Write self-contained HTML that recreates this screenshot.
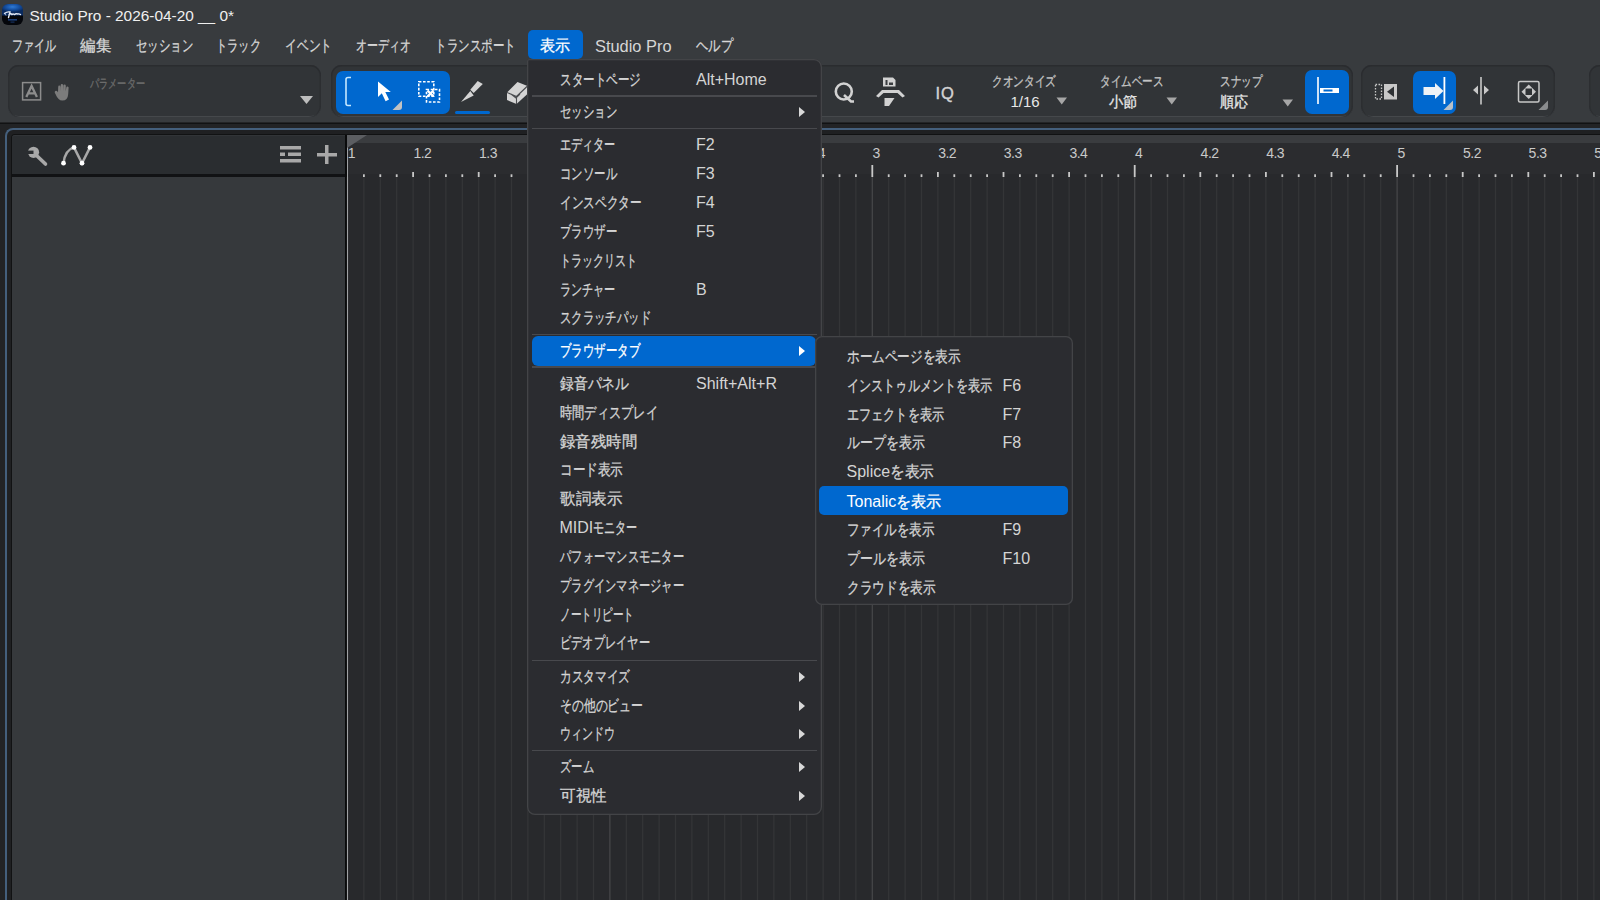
<!DOCTYPE html><html lang="ja"><head><meta charset="utf-8"><style>
html,body{margin:0;padding:0;width:1600px;height:900px;overflow:hidden;background:#232426}
body{position:relative;font-family:"Liberation Sans",sans-serif}
.r{position:absolute}
.t{position:absolute;white-space:nowrap;line-height:20px}
.j{display:inline-block;font-weight:normal;vertical-align:baseline}
.j i{display:inline-block;font-style:normal;transform-origin:0 50%;white-space:nowrap;-webkit-text-stroke:0.3px currentColor}
</style></head><body>
<div class=r style="left:0.0px;top:0.0px;width:1600.0px;height:122.0px;background:#383b3e;"></div>
<div class=r style="left:1.5px;top:3.5px;width:21px;height:21.5px;border-radius:6px;background:radial-gradient(ellipse 60% 45% at 50% 25%,#2f7ad6,#134b9a 60%,#0a2a5e 100%) top/100% 55% no-repeat,#04060b"></div>
<svg class=r style="left:2px;top:9px" width="20" height="15" viewBox="0 0 20 15"><path d="M2.5 4.5 Q5 2.5 8 3 L6.5 8.5 M7 5.5 Q9 4 10 5.5 Q11 4.5 12.5 5.5 Q14 4.2 15.5 5 Q17 4.5 18.5 5.5" stroke="#e8eef8" stroke-width="1.4" fill="none" stroke-linecap="round"/><path d="M3 3.8 L4 6.5" stroke="#9fb8e0" stroke-width="1"/><rect x="6" y="10" width="9" height="1.6" fill="#1b3e78"/><rect x="8.5" y="12.5" width="4" height="1.2" fill="#16305c"/></svg>
<div class=t style="left:29.5px;top:5.8px;font-size:15.4px;color:#f0f0f0;">Studio Pro - 2026-04-20 __ 0*</div>
<div class=t style="left:12.0px;top:35.5px;font-size:16.0px;color:#d6d6d6;"><b class=j style="width:44.00px"><i style="transform:scaleX(0.6875)">ファイル</i></b></div>
<div class=t style="left:80.0px;top:35.5px;font-size:16.0px;color:#d6d6d6;"><b class=j style="width:31.00px"><i style="transform:scaleX(0.9688)">編集</i></b></div>
<div class=t style="left:136.0px;top:35.5px;font-size:16.0px;color:#d6d6d6;"><b class=j style="width:57.00px"><i style="transform:scaleX(0.7125)">セッション</i></b></div>
<div class=t style="left:216.0px;top:35.5px;font-size:16.0px;color:#d6d6d6;"><b class=j style="width:45.00px"><i style="transform:scaleX(0.7031)">トラック</i></b></div>
<div class=t style="left:285.0px;top:35.5px;font-size:16.0px;color:#d6d6d6;"><b class=j style="width:47.00px"><i style="transform:scaleX(0.7344)">イベント</i></b></div>
<div class=t style="left:356.0px;top:35.5px;font-size:16.0px;color:#d6d6d6;"><b class=j style="width:55.00px"><i style="transform:scaleX(0.6875)">オーディオ</i></b></div>
<div class=t style="left:434.5px;top:35.5px;font-size:16.0px;color:#d6d6d6;"><b class=j style="width:80.50px"><i style="transform:scaleX(0.7188)">トランスポート</i></b></div>
<div class=r style="left:528px;top:30px;width:55px;height:29px;border-radius:5px;background:#0068cf"></div>
<div class=t style="left:540.0px;top:35.5px;font-size:16.0px;color:#ffffff;"><b class=j style="width:30.00px"><i style="transform:scaleX(0.9375)">表示</i></b></div>
<div class=t style="left:595.0px;top:35.5px;font-size:16.4px;color:#d6d6d6;">Studio Pro</div>
<div class=t style="left:696.0px;top:35.5px;font-size:16.0px;color:#d6d6d6;"><b class=j style="width:37.00px"><i style="transform:scaleX(0.7708)">ヘルプ</i></b></div>
<div class=r style="left:8px;top:65px;width:313px;height:52px;border-radius:11px;background:#313437;box-shadow:inset 0 1.5px 0.5px #2a2c2f,inset 1.5px 0 0.5px #2c2e31,inset -1.5px 0 0.5px #2c2e31,inset 0 -1px 0 #45484b"></div>
<div class=r style="left:331px;top:65px;width:1022px;height:52px;border-radius:11px;background:#313437;box-shadow:inset 0 1.5px 0.5px #2a2c2f,inset 1.5px 0 0.5px #2c2e31,inset -1.5px 0 0.5px #2c2e31,inset 0 -1px 0 #45484b"></div>
<div class=r style="left:1361px;top:65px;width:194px;height:52px;border-radius:11px;background:#313437;box-shadow:inset 0 1.5px 0.5px #2a2c2f,inset 1.5px 0 0.5px #2c2e31,inset -1.5px 0 0.5px #2c2e31,inset 0 -1px 0 #45484b"></div>
<div class=r style="left:1589px;top:65px;width:40px;height:52px;border-radius:11px;background:#313437;box-shadow:inset 0 1.5px 0.5px #2a2c2f,inset 1.5px 0 0.5px #2c2e31,inset -1.5px 0 0.5px #2c2e31,inset 0 -1px 0 #45484b"></div>
<svg class=r style="left:21px;top:81px" width="22" height="21" viewBox="0 0 22 21"><rect x="1.6" y="1.6" width="18" height="17.3" fill="none" stroke="#8c8c8c" stroke-width="1.5"/><path d="M5.3 16 L10.6 5 L15.9 16 M7.4 12.3 L13.8 12.3" stroke="#8c8c8c" stroke-width="2.3" fill="none"/></svg>
<svg class=r style="left:53px;top:83px" width="19" height="19" viewBox="0 0 19 19"><path d="M2.2 10.5 Q1 8.8 2.3 8 Q3.6 7.3 5 9.2 L5.2 4 Q5.2 2.6 6.3 2.6 Q7.4 2.6 7.5 4 L7.6 8 L7.7 2.2 Q7.7 0.9 8.9 0.9 Q10.1 0.9 10.1 2.2 L10.2 8 L10.4 2.6 Q10.4 1.4 11.6 1.4 Q12.8 1.4 12.8 2.7 L12.7 8.3 L13.3 4.5 Q13.5 3.3 14.6 3.4 Q15.7 3.5 15.6 4.8 L15.2 11 Q14.8 17.6 9.3 17.6 Q5.2 17.6 2.2 10.5 Z" fill="#7c7c7c"/></svg>
<div class=t style="left:89.5px;top:73.5px;font-size:13.0px;color:#6c6c6c;"><b class=j style="width:55.00px"><i style="transform:scaleX(0.7051)">パラメーター</i></b></div>
<svg class=r style="left:299px;top:95px" width="15" height="10"><path d="M1 1 L14 1 L7.5 9 Z" fill="#bdbdbd"/></svg>
<div class=r style="left:335.5px;top:70.5px;width:114px;height:43px;border-radius:7px;background:#0068cf"></div>
<svg class=r style="left:343px;top:76px" width="10" height="32"><path d="M8 1.5 L5 1.5 Q3 1.5 3 3.5 L3 27.5 Q3 29.5 5 29.5 L8 29.5" stroke="#c4e8ff" stroke-width="1.6" fill="none"/></svg>
<svg class=r style="left:376px;top:80px" width="17" height="23"><path d="M2 1.5 L2 17 L5.8 13.2 L9.6 21.2 L13 19.6 L9.3 12 L14.8 12 Z" fill="#ffffff"/></svg>
<svg class=r style="left:392px;top:100px" width="11" height="11"><path d="M0.5 10 L10 0.5 L10 7 Q10 10 7 10 Z" fill="#c2c2c2"/></svg>
<svg class=r style="left:416px;top:79px" width="26" height="26"><rect x="2.8" y="2.8" width="15" height="14.5" fill="none" stroke="#fff" stroke-width="1.6" stroke-dasharray="2.6 1.6"/><rect x="10.5" y="10.5" width="13" height="12.5" fill="none" stroke="#fff" stroke-width="1.6" stroke-dasharray="2.6 1.6"/><path d="M11.5 11.5 L17.5 17.5 M17.5 11.5 L11.5 17.5" stroke="#fff" stroke-width="2.4"/></svg>
<svg class=r style="left:458px;top:78px" width="28" height="27"><path d="M3 24 L12.3 13 L15.7 17.6 Z" fill="#d4d4d4"/><path d="M12.3 11.7 L19.7 3 L24.8 5.9 L15.7 15 Z" fill="#d4d4d4"/></svg>
<div class=r style="left:455px;top:110.5px;width:35px;height:3.5px;border-radius:2px;background:#0068cf"></div>
<svg class=r style="left:504px;top:79px" width="24" height="27"><path d="M3 13.5 L13.5 3 L23.5 7 L23.5 15 L12.5 25 L3 21 Z" fill="#d4d4d4"/><path d="M3 13.5 L12.5 17.5 L23.5 7 M12.5 17.5 L12.5 25 M7 15 L12 19 L16 15" stroke="#4a4c4f" stroke-width="1.1" fill="none"/></svg>
<svg class=r style="left:832px;top:80px" width="24" height="24"><circle cx="11.8" cy="11.5" r="8" fill="none" stroke="#d2d2d2" stroke-width="2.6"/><path d="M12 15 L19 21.5 L22 21.5" stroke="#d2d2d2" stroke-width="2.6" fill="none"/></svg>
<svg class=r style="left:874px;top:76px" width="33" height="32"><path d="M9 1.5 L19 1.5 L21.5 4 L21.5 10.5 L9 10.5 Z" fill="#d2d2d2"/><rect x="11.5" y="4" width="2" height="5" fill="#3a3d40"/><rect x="15" y="6.5" width="4" height="2.5" fill="#3a3d40"/><path d="M2 20 L8 14 L25 14 L31 20 L28.5 21.5 L23.5 17 L9.5 17 L4.5 21.5 Z" fill="#d2d2d2"/><path d="M10.5 22 L20.5 22 L15 30 L10.5 30 Z" fill="#d2d2d2"/></svg>
<div class=t style="left:935.5px;top:82.5px;font-size:16.5px;line-height:20px;color:#d2d2d2;letter-spacing:1px;-webkit-text-stroke:0.4px #d2d2d2">IQ</div>
<div class=t style="left:992.0px;top:71.0px;font-size:14.0px;color:#c4c4c4;"><b class=j style="width:64.00px"><i style="transform:scaleX(0.7619)">クオンタイズ</i></b></div>
<div class=t style="left:1010.5px;top:92.0px;font-size:15.0px;color:#e8e8e8;">1/16</div>
<svg class=r style="left:1056px;top:97px" width="12" height="8"><path d="M0.5 0.5 L11 0.5 L5.75 7.5 Z" fill="#a6a6a6"/></svg>
<div class=t style="left:1099.5px;top:71.0px;font-size:14.0px;color:#c4c4c4;"><b class=j style="width:63.50px"><i style="transform:scaleX(0.7560)">タイムベース</i></b></div>
<div class=t style="left:1108.5px;top:92.0px;font-size:15.0px;color:#e8e8e8;"><b class=j style="width:28.50px"><i style="transform:scaleX(0.9500)">小節</i></b></div>
<svg class=r style="left:1166px;top:97px" width="12" height="8"><path d="M0.5 0.5 L11 0.5 L5.75 7.5 Z" fill="#a6a6a6"/></svg>
<div class=t style="left:1219.5px;top:71.0px;font-size:14.0px;color:#c4c4c4;"><b class=j style="width:42.50px"><i style="transform:scaleX(0.7589)">スナップ</i></b></div>
<div class=t style="left:1220.0px;top:92.0px;font-size:15.0px;color:#e8e8e8;"><b class=j style="width:28.00px"><i style="transform:scaleX(0.9333)">順応</i></b></div>
<svg class=r style="left:1282px;top:98.5px" width="12" height="8"><path d="M0.5 0.5 L11 0.5 L5.75 7.5 Z" fill="#a6a6a6"/></svg>
<div class=r style="left:1305px;top:70px;width:44px;height:44px;border-radius:7px;background:#0068cf"></div>
<svg class=r style="left:1314px;top:76px" width="28" height="30"><rect x="3.2" y="1" width="1.6" height="27" fill="#fff"/><rect x="6" y="12" width="19" height="5" fill="#fff"/><rect x="9.5" y="13.5" width="9" height="2" fill="#0068cf"/></svg>
<svg class=r style="left:1373px;top:82px" width="26" height="19"><rect x="2.5" y="2.5" width="6" height="14.5" fill="none" stroke="#c8c8c8" stroke-width="1.3" stroke-dasharray="1.6 1.4"/><rect x="11" y="2" width="13" height="15.5" fill="#c8c8c8"/><path d="M21 4.5 L14 9.75 L21 15 Z" fill="#2f3235"/></svg>
<div class=r style="left:1413px;top:70.5px;width:43px;height:43px;border-radius:7px;background:#0068cf"></div>
<svg class=r style="left:1422px;top:76px" width="26" height="30"><path d="M1.5 11 L13 11 L13 7 L21.5 15 L13 23 L13 19 L1.5 19 Z" fill="#eef2f6"/><rect x="21.5" y="1" width="1.8" height="27" fill="#fff"/></svg>
<svg class=r style="left:1443px;top:100px" width="11" height="11"><path d="M0.5 10 L10 0.5 L10 7 Q10 10 7 10 Z" fill="#b8c0c8"/></svg>
<svg class=r style="left:1471px;top:76px" width="20" height="30"><rect x="9.2" y="1" width="1.6" height="27.5" fill="#c8c8c8"/><path d="M7 9.5 L2 14 L7 18.5 Z M13 9.5 L18 14 L13 18.5 Z" fill="#c8c8c8"/></svg>
<svg class=r style="left:1516px;top:79px" width="26" height="26"><rect x="2.5" y="2.5" width="20.5" height="20.5" rx="1.5" fill="none" stroke="#c8c8c8" stroke-width="1.5"/><path d="M12.75 5.5 L20 12.75 L12.75 20 L5.5 12.75 Z" fill="#c8c8c8"/><rect x="9.5" y="9.5" width="6.5" height="6.5" fill="#2f3235"/></svg>
<svg class=r style="left:1538px;top:100px" width="11" height="11"><path d="M0.5 10 L10 0.5 L10 7 Q10 10 7 10 Z" fill="#8a8c8e"/></svg>
<div class=r style="left:0.0px;top:122.5px;width:1600.0px;height:1.5px;background:#111213;"></div>
<div class=r style="left:0.0px;top:124.0px;width:1600.0px;height:776.0px;background:#222325;"></div>
<div class=r style="left:5px;top:128px;width:1600px;height:800px;border:2px solid #445f7c;border-right:none;border-top-left-radius:8px;box-sizing:border-box;background:#1f2022"></div>
<div class=r style="left:11px;top:134px;width:1600px;height:800px;border-top-left-radius:4px;background:#111213"></div>
<div class=r style="left:12px;top:135px;width:333px;height:39px;border-top-left-radius:3px;background:#2a2d30;box-shadow:inset 0 1px 0 #313437"></div>
<div class=r style="left:12.0px;top:174.0px;width:333.0px;height:3.0px;background:#111214;"></div>
<div class=r style="left:12.0px;top:177.0px;width:333.0px;height:723.0px;background:#36393c;"></div>
<div class=r style="left:345.0px;top:135.0px;width:2.0px;height:765.0px;background:#0a0b0c;"></div>
<div class=r style="left:347.0px;top:135.0px;width:1253.0px;height:8.0px;background:#3a3c3f;"></div>
<div class=r style="left:347.0px;top:143.0px;width:1253.0px;height:31.0px;background:#2b2c2f;"></div>
<div class=r style="left:347.0px;top:174.0px;width:1253.0px;height:726.0px;background:#28292c;"></div>
<svg class=r style="left:0;top:177px" width="1600" height="723"><rect x="346.85" y="0" width="1.3" height="723" fill="#454648"/><rect x="363.25" y="0" width="1.3" height="723" fill="#343537"/><rect x="379.65" y="0" width="1.3" height="723" fill="#343537"/><rect x="396.05" y="0" width="1.3" height="723" fill="#343537"/><rect x="412.45" y="0" width="1.3" height="723" fill="#343537"/><rect x="428.85" y="0" width="1.3" height="723" fill="#343537"/><rect x="445.25" y="0" width="1.3" height="723" fill="#343537"/><rect x="461.65" y="0" width="1.3" height="723" fill="#343537"/><rect x="478.05" y="0" width="1.3" height="723" fill="#343537"/><rect x="494.45" y="0" width="1.3" height="723" fill="#343537"/><rect x="510.85" y="0" width="1.3" height="723" fill="#343537"/><rect x="527.25" y="0" width="1.3" height="723" fill="#343537"/><rect x="543.65" y="0" width="1.3" height="723" fill="#343537"/><rect x="560.05" y="0" width="1.3" height="723" fill="#343537"/><rect x="576.45" y="0" width="1.3" height="723" fill="#343537"/><rect x="592.85" y="0" width="1.3" height="723" fill="#343537"/><rect x="609.25" y="0" width="1.3" height="723" fill="#454648"/><rect x="625.65" y="0" width="1.3" height="723" fill="#343537"/><rect x="642.05" y="0" width="1.3" height="723" fill="#343537"/><rect x="658.45" y="0" width="1.3" height="723" fill="#343537"/><rect x="674.85" y="0" width="1.3" height="723" fill="#343537"/><rect x="691.25" y="0" width="1.3" height="723" fill="#343537"/><rect x="707.65" y="0" width="1.3" height="723" fill="#343537"/><rect x="724.05" y="0" width="1.3" height="723" fill="#343537"/><rect x="740.45" y="0" width="1.3" height="723" fill="#343537"/><rect x="756.85" y="0" width="1.3" height="723" fill="#343537"/><rect x="773.25" y="0" width="1.3" height="723" fill="#343537"/><rect x="789.65" y="0" width="1.3" height="723" fill="#343537"/><rect x="806.05" y="0" width="1.3" height="723" fill="#343537"/><rect x="822.45" y="0" width="1.3" height="723" fill="#343537"/><rect x="838.85" y="0" width="1.3" height="723" fill="#343537"/><rect x="855.25" y="0" width="1.3" height="723" fill="#343537"/><rect x="871.65" y="0" width="1.3" height="723" fill="#454648"/><rect x="888.05" y="0" width="1.3" height="723" fill="#343537"/><rect x="904.45" y="0" width="1.3" height="723" fill="#343537"/><rect x="920.85" y="0" width="1.3" height="723" fill="#343537"/><rect x="937.25" y="0" width="1.3" height="723" fill="#343537"/><rect x="953.65" y="0" width="1.3" height="723" fill="#343537"/><rect x="970.05" y="0" width="1.3" height="723" fill="#343537"/><rect x="986.45" y="0" width="1.3" height="723" fill="#343537"/><rect x="1002.85" y="0" width="1.3" height="723" fill="#343537"/><rect x="1019.25" y="0" width="1.3" height="723" fill="#343537"/><rect x="1035.65" y="0" width="1.3" height="723" fill="#343537"/><rect x="1052.05" y="0" width="1.3" height="723" fill="#343537"/><rect x="1068.45" y="0" width="1.3" height="723" fill="#343537"/><rect x="1084.85" y="0" width="1.3" height="723" fill="#343537"/><rect x="1101.25" y="0" width="1.3" height="723" fill="#343537"/><rect x="1117.65" y="0" width="1.3" height="723" fill="#343537"/><rect x="1134.05" y="0" width="1.3" height="723" fill="#454648"/><rect x="1150.45" y="0" width="1.3" height="723" fill="#343537"/><rect x="1166.85" y="0" width="1.3" height="723" fill="#343537"/><rect x="1183.25" y="0" width="1.3" height="723" fill="#343537"/><rect x="1199.65" y="0" width="1.3" height="723" fill="#343537"/><rect x="1216.05" y="0" width="1.3" height="723" fill="#343537"/><rect x="1232.45" y="0" width="1.3" height="723" fill="#343537"/><rect x="1248.85" y="0" width="1.3" height="723" fill="#343537"/><rect x="1265.25" y="0" width="1.3" height="723" fill="#343537"/><rect x="1281.65" y="0" width="1.3" height="723" fill="#343537"/><rect x="1298.05" y="0" width="1.3" height="723" fill="#343537"/><rect x="1314.45" y="0" width="1.3" height="723" fill="#343537"/><rect x="1330.85" y="0" width="1.3" height="723" fill="#343537"/><rect x="1347.25" y="0" width="1.3" height="723" fill="#343537"/><rect x="1363.65" y="0" width="1.3" height="723" fill="#343537"/><rect x="1380.05" y="0" width="1.3" height="723" fill="#343537"/><rect x="1396.45" y="0" width="1.3" height="723" fill="#454648"/><rect x="1412.85" y="0" width="1.3" height="723" fill="#343537"/><rect x="1429.25" y="0" width="1.3" height="723" fill="#343537"/><rect x="1445.65" y="0" width="1.3" height="723" fill="#343537"/><rect x="1462.05" y="0" width="1.3" height="723" fill="#343537"/><rect x="1478.45" y="0" width="1.3" height="723" fill="#343537"/><rect x="1494.85" y="0" width="1.3" height="723" fill="#343537"/><rect x="1511.25" y="0" width="1.3" height="723" fill="#343537"/><rect x="1527.65" y="0" width="1.3" height="723" fill="#343537"/><rect x="1544.05" y="0" width="1.3" height="723" fill="#343537"/><rect x="1560.45" y="0" width="1.3" height="723" fill="#343537"/><rect x="1576.85" y="0" width="1.3" height="723" fill="#343537"/><rect x="1593.25" y="0" width="1.3" height="723" fill="#343537"/></svg>
<svg class=r style="left:0;top:0" width="1600" height="180"><rect x="363.00" y="174.3" width="1.8" height="2.7" fill="#c8c8c8"/><rect x="379.40" y="174.3" width="1.8" height="2.7" fill="#c8c8c8"/><rect x="395.80" y="174.3" width="1.8" height="2.7" fill="#c8c8c8"/><rect x="412.20" y="172" width="1.8" height="5" fill="#c8c8c8"/><rect x="428.60" y="174.3" width="1.8" height="2.7" fill="#c8c8c8"/><rect x="445.00" y="174.3" width="1.8" height="2.7" fill="#c8c8c8"/><rect x="461.40" y="174.3" width="1.8" height="2.7" fill="#c8c8c8"/><rect x="477.80" y="172" width="1.8" height="5" fill="#c8c8c8"/><rect x="494.20" y="174.3" width="1.8" height="2.7" fill="#c8c8c8"/><rect x="510.60" y="174.3" width="1.8" height="2.7" fill="#c8c8c8"/><rect x="527.00" y="174.3" width="1.8" height="2.7" fill="#c8c8c8"/><rect x="543.40" y="172" width="1.8" height="5" fill="#c8c8c8"/><rect x="559.80" y="174.3" width="1.8" height="2.7" fill="#c8c8c8"/><rect x="576.20" y="174.3" width="1.8" height="2.7" fill="#c8c8c8"/><rect x="592.60" y="174.3" width="1.8" height="2.7" fill="#c8c8c8"/><rect x="609.00" y="165" width="1.8" height="12" fill="#c8c8c8"/><rect x="625.40" y="174.3" width="1.8" height="2.7" fill="#c8c8c8"/><rect x="641.80" y="174.3" width="1.8" height="2.7" fill="#c8c8c8"/><rect x="658.20" y="174.3" width="1.8" height="2.7" fill="#c8c8c8"/><rect x="674.60" y="172" width="1.8" height="5" fill="#c8c8c8"/><rect x="691.00" y="174.3" width="1.8" height="2.7" fill="#c8c8c8"/><rect x="707.40" y="174.3" width="1.8" height="2.7" fill="#c8c8c8"/><rect x="723.80" y="174.3" width="1.8" height="2.7" fill="#c8c8c8"/><rect x="740.20" y="172" width="1.8" height="5" fill="#c8c8c8"/><rect x="756.60" y="174.3" width="1.8" height="2.7" fill="#c8c8c8"/><rect x="773.00" y="174.3" width="1.8" height="2.7" fill="#c8c8c8"/><rect x="789.40" y="174.3" width="1.8" height="2.7" fill="#c8c8c8"/><rect x="805.80" y="172" width="1.8" height="5" fill="#c8c8c8"/><rect x="822.20" y="174.3" width="1.8" height="2.7" fill="#c8c8c8"/><rect x="838.60" y="174.3" width="1.8" height="2.7" fill="#c8c8c8"/><rect x="855.00" y="174.3" width="1.8" height="2.7" fill="#c8c8c8"/><rect x="871.40" y="165" width="1.8" height="12" fill="#c8c8c8"/><rect x="887.80" y="174.3" width="1.8" height="2.7" fill="#c8c8c8"/><rect x="904.20" y="174.3" width="1.8" height="2.7" fill="#c8c8c8"/><rect x="920.60" y="174.3" width="1.8" height="2.7" fill="#c8c8c8"/><rect x="937.00" y="172" width="1.8" height="5" fill="#c8c8c8"/><rect x="953.40" y="174.3" width="1.8" height="2.7" fill="#c8c8c8"/><rect x="969.80" y="174.3" width="1.8" height="2.7" fill="#c8c8c8"/><rect x="986.20" y="174.3" width="1.8" height="2.7" fill="#c8c8c8"/><rect x="1002.60" y="172" width="1.8" height="5" fill="#c8c8c8"/><rect x="1019.00" y="174.3" width="1.8" height="2.7" fill="#c8c8c8"/><rect x="1035.40" y="174.3" width="1.8" height="2.7" fill="#c8c8c8"/><rect x="1051.80" y="174.3" width="1.8" height="2.7" fill="#c8c8c8"/><rect x="1068.20" y="172" width="1.8" height="5" fill="#c8c8c8"/><rect x="1084.60" y="174.3" width="1.8" height="2.7" fill="#c8c8c8"/><rect x="1101.00" y="174.3" width="1.8" height="2.7" fill="#c8c8c8"/><rect x="1117.40" y="174.3" width="1.8" height="2.7" fill="#c8c8c8"/><rect x="1133.80" y="165" width="1.8" height="12" fill="#c8c8c8"/><rect x="1150.20" y="174.3" width="1.8" height="2.7" fill="#c8c8c8"/><rect x="1166.60" y="174.3" width="1.8" height="2.7" fill="#c8c8c8"/><rect x="1183.00" y="174.3" width="1.8" height="2.7" fill="#c8c8c8"/><rect x="1199.40" y="172" width="1.8" height="5" fill="#c8c8c8"/><rect x="1215.80" y="174.3" width="1.8" height="2.7" fill="#c8c8c8"/><rect x="1232.20" y="174.3" width="1.8" height="2.7" fill="#c8c8c8"/><rect x="1248.60" y="174.3" width="1.8" height="2.7" fill="#c8c8c8"/><rect x="1265.00" y="172" width="1.8" height="5" fill="#c8c8c8"/><rect x="1281.40" y="174.3" width="1.8" height="2.7" fill="#c8c8c8"/><rect x="1297.80" y="174.3" width="1.8" height="2.7" fill="#c8c8c8"/><rect x="1314.20" y="174.3" width="1.8" height="2.7" fill="#c8c8c8"/><rect x="1330.60" y="172" width="1.8" height="5" fill="#c8c8c8"/><rect x="1347.00" y="174.3" width="1.8" height="2.7" fill="#c8c8c8"/><rect x="1363.40" y="174.3" width="1.8" height="2.7" fill="#c8c8c8"/><rect x="1379.80" y="174.3" width="1.8" height="2.7" fill="#c8c8c8"/><rect x="1396.20" y="165" width="1.8" height="12" fill="#c8c8c8"/><rect x="1412.60" y="174.3" width="1.8" height="2.7" fill="#c8c8c8"/><rect x="1429.00" y="174.3" width="1.8" height="2.7" fill="#c8c8c8"/><rect x="1445.40" y="174.3" width="1.8" height="2.7" fill="#c8c8c8"/><rect x="1461.80" y="172" width="1.8" height="5" fill="#c8c8c8"/><rect x="1478.20" y="174.3" width="1.8" height="2.7" fill="#c8c8c8"/><rect x="1494.60" y="174.3" width="1.8" height="2.7" fill="#c8c8c8"/><rect x="1511.00" y="174.3" width="1.8" height="2.7" fill="#c8c8c8"/><rect x="1527.40" y="172" width="1.8" height="5" fill="#c8c8c8"/><rect x="1543.80" y="174.3" width="1.8" height="2.7" fill="#c8c8c8"/><rect x="1560.20" y="174.3" width="1.8" height="2.7" fill="#c8c8c8"/><rect x="1576.60" y="174.3" width="1.8" height="2.7" fill="#c8c8c8"/><rect x="1593.00" y="172" width="1.8" height="5" fill="#c8c8c8"/></svg>
<div class=t style="left:347.8px;top:143.2px;font-size:14.0px;color:#c9c9c9;letter-spacing:-0.5px">1</div>
<div class=t style="left:413.4px;top:143.2px;font-size:14.0px;color:#c9c9c9;letter-spacing:-0.5px">1.2</div>
<div class=t style="left:479.0px;top:143.2px;font-size:14.0px;color:#c9c9c9;letter-spacing:-0.5px">1.3</div>
<div class=t style="left:544.6px;top:143.2px;font-size:14.0px;color:#c9c9c9;letter-spacing:-0.5px">1.4</div>
<div class=t style="left:610.2px;top:143.2px;font-size:14.0px;color:#c9c9c9;letter-spacing:-0.5px">2</div>
<div class=t style="left:675.8px;top:143.2px;font-size:14.0px;color:#c9c9c9;letter-spacing:-0.5px">2.2</div>
<div class=t style="left:741.4px;top:143.2px;font-size:14.0px;color:#c9c9c9;letter-spacing:-0.5px">2.3</div>
<div class=t style="left:807.0px;top:143.2px;font-size:14.0px;color:#c9c9c9;letter-spacing:-0.5px">2.4</div>
<div class=t style="left:872.6px;top:143.2px;font-size:14.0px;color:#c9c9c9;letter-spacing:-0.5px">3</div>
<div class=t style="left:938.2px;top:143.2px;font-size:14.0px;color:#c9c9c9;letter-spacing:-0.5px">3.2</div>
<div class=t style="left:1003.8px;top:143.2px;font-size:14.0px;color:#c9c9c9;letter-spacing:-0.5px">3.3</div>
<div class=t style="left:1069.4px;top:143.2px;font-size:14.0px;color:#c9c9c9;letter-spacing:-0.5px">3.4</div>
<div class=t style="left:1135.0px;top:143.2px;font-size:14.0px;color:#c9c9c9;letter-spacing:-0.5px">4</div>
<div class=t style="left:1200.6px;top:143.2px;font-size:14.0px;color:#c9c9c9;letter-spacing:-0.5px">4.2</div>
<div class=t style="left:1266.2px;top:143.2px;font-size:14.0px;color:#c9c9c9;letter-spacing:-0.5px">4.3</div>
<div class=t style="left:1331.8px;top:143.2px;font-size:14.0px;color:#c9c9c9;letter-spacing:-0.5px">4.4</div>
<div class=t style="left:1397.4px;top:143.2px;font-size:14.0px;color:#c9c9c9;letter-spacing:-0.5px">5</div>
<div class=t style="left:1463.0px;top:143.2px;font-size:14.0px;color:#c9c9c9;letter-spacing:-0.5px">5.2</div>
<div class=t style="left:1528.6px;top:143.2px;font-size:14.0px;color:#c9c9c9;letter-spacing:-0.5px">5.3</div>
<div class=t style="left:1594.2px;top:143.2px;font-size:14.0px;color:#c9c9c9;letter-spacing:-0.5px">5.4</div>
<div class=r style="left:346.5px;top:135.0px;width:1.5px;height:765.0px;background:#a0a2a4;"></div>
<svg class=r style="left:347px;top:135px" width="22" height="14"><path d="M0 0 L20 0 L0 13 Z" fill="#5c5e62"/></svg>
<svg class=r style="left:20px;top:140px" width="80" height="30"><circle cx="13.5" cy="12.3" r="5.6" fill="#a8a8a8"/><rect x="6" y="10.6" width="7.5" height="3.4" fill="#2a2d30"/><path d="M15.5 14.5 L25.5 24" stroke="#a8a8a8" stroke-width="3.6" stroke-linecap="round"/><path d="M43.5 23.2 Q45 10 54 7.4 M54 7.4 L62 23.2 L70 7.4" stroke="#a8a8a8" stroke-width="2.5" fill="none"/><circle cx="43.5" cy="23.2" r="2.4" fill="#fff"/><circle cx="54" cy="7.4" r="2.4" fill="#fff"/><circle cx="62" cy="23.2" r="2.4" fill="#fff"/><circle cx="70" cy="7.4" r="2.4" fill="#fff"/></svg>
<svg class=r style="left:279px;top:145px" width="23" height="19"><rect x="1" y="1" width="21" height="3.5" fill="#a8a8a8"/><rect x="1" y="7.5" width="5" height="3.5" fill="#a8a8a8"/><rect x="9" y="7.5" width="13" height="3.5" fill="#a8a8a8"/><rect x="1" y="14" width="21" height="3.5" fill="#a8a8a8"/></svg>
<svg class=r style="left:316px;top:144px" width="22" height="22"><rect x="9" y="1" width="3.5" height="19" fill="#a8a8a8"/><rect x="1" y="9" width="20" height="3.5" fill="#a8a8a8"/></svg>
<div class=r style="left:527px;top:59px;width:295px;height:756px;border-radius:2px 8px 8px 8px;background:#2b2c30;box-shadow:inset 0 0 0 1.3px #434447"></div>
<div class=t style="left:559.5px;top:69.7px;font-size:16.0px;color:#d4d4d4;"><b class=j style="width:80.50px"><i style="transform:scaleX(0.7188)">スタートページ</i></b></div>
<div class=t style="left:696.0px;top:69.7px;font-size:16.0px;color:#d4d4d4;">Alt+Home</div>
<div class=r style="left:532.0px;top:95.0px;width:285.0px;height:1.5px;background:#48494d;"></div>
<div class=t style="left:559.5px;top:102.2px;font-size:16.0px;color:#d4d4d4;"><b class=j style="width:57.00px"><i style="transform:scaleX(0.7125)">セッション</i></b></div>
<svg class=r style="left:798.0px;top:106.2px" width="8" height="12"><path d="M1 1 L7 6 L1 11 Z" fill="#d8d8d8"/></svg>
<div class=r style="left:532.0px;top:127.6px;width:285.0px;height:1.5px;background:#48494d;"></div>
<div class=t style="left:559.5px;top:135.3px;font-size:16.0px;color:#d4d4d4;"><b class=j style="width:55.50px"><i style="transform:scaleX(0.6937)">エディター</i></b></div>
<div class=t style="left:696.0px;top:135.3px;font-size:16.0px;color:#d4d4d4;">F2</div>
<div class=t style="left:559.5px;top:164.2px;font-size:16.0px;color:#d4d4d4;"><b class=j style="width:57.00px"><i style="transform:scaleX(0.7125)">コンソール</i></b></div>
<div class=t style="left:696.0px;top:164.2px;font-size:16.0px;color:#d4d4d4;">F3</div>
<div class=t style="left:559.5px;top:193.0px;font-size:16.0px;color:#d4d4d4;"><b class=j style="width:81.50px"><i style="transform:scaleX(0.7277)">インスペクター</i></b></div>
<div class=t style="left:696.0px;top:193.0px;font-size:16.0px;color:#d4d4d4;">F4</div>
<div class=t style="left:559.5px;top:221.9px;font-size:16.0px;color:#d4d4d4;"><b class=j style="width:57.00px"><i style="transform:scaleX(0.7125)">ブラウザー</i></b></div>
<div class=t style="left:696.0px;top:221.9px;font-size:16.0px;color:#d4d4d4;">F5</div>
<div class=t style="left:559.5px;top:250.7px;font-size:16.0px;color:#d4d4d4;"><b class=j style="width:77.50px"><i style="transform:scaleX(0.6920)">トラックリスト</i></b></div>
<div class=t style="left:559.5px;top:279.6px;font-size:16.0px;color:#d4d4d4;"><b class=j style="width:55.50px"><i style="transform:scaleX(0.6937)">ランチャー</i></b></div>
<div class=t style="left:696.0px;top:279.6px;font-size:16.0px;color:#d4d4d4;">B</div>
<div class=t style="left:559.5px;top:308.4px;font-size:16.0px;color:#d4d4d4;"><b class=j style="width:91.00px"><i style="transform:scaleX(0.7109)">スクラッチパッド</i></b></div>
<div class=r style="left:532.0px;top:333.9px;width:285.0px;height:1.5px;background:#48494d;"></div>
<div class=r style="left:532px;top:336px;width:284px;height:29.5px;border-radius:6px;background:#0068cf"></div>
<div class=t style="left:560.0px;top:340.6px;font-size:16.0px;color:#ffffff;"><b class=j style="width:80.00px"><i style="transform:scaleX(0.7143)">ブラウザータブ</i></b></div>
<svg class=r style="left:798.0px;top:344.6px" width="8" height="12"><path d="M1 1 L7 6 L1 11 Z" fill="#ffffff"/></svg>
<div class=r style="left:532.0px;top:366.2px;width:285.0px;height:1.5px;background:#48494d;"></div>
<div class=t style="left:559.5px;top:374.0px;font-size:16.0px;color:#d4d4d4;"><b class=j style="width:69.00px"><i style="transform:scaleX(0.8625)">録音パネル</i></b></div>
<div class=t style="left:696.0px;top:374.0px;font-size:16.0px;color:#d4d4d4;">Shift+Alt+R</div>
<div class=t style="left:559.5px;top:402.8px;font-size:16.0px;color:#d4d4d4;"><b class=j style="width:98.00px"><i style="transform:scaleX(0.7656)">時間ディスプレイ</i></b></div>
<div class=t style="left:559.5px;top:431.6px;font-size:16.0px;color:#d4d4d4;"><b class=j style="width:77.00px"><i style="transform:scaleX(0.9625)">録音残時間</i></b></div>
<div class=t style="left:559.5px;top:460.4px;font-size:16.0px;color:#d4d4d4;"><b class=j style="width:63.00px"><i style="transform:scaleX(0.7875)">コード表示</i></b></div>
<div class=t style="left:559.5px;top:489.3px;font-size:16.0px;color:#d4d4d4;"><b class=j style="width:62.00px"><i style="transform:scaleX(0.9688)">歌詞表示</i></b></div>
<div class=t style="left:559.5px;top:518.1px;font-size:16.0px;color:#d4d4d4;">MIDI<b class=j style="width:44.23px"><i style="transform:scaleX(0.6910)">モニター</i></b></div>
<div class=t style="left:559.5px;top:547.0px;font-size:16.0px;color:#d4d4d4;"><b class=j style="width:124.00px"><i style="transform:scaleX(0.7045)">パフォーマンスモニター</i></b></div>
<div class=t style="left:559.5px;top:575.8px;font-size:16.0px;color:#d4d4d4;"><b class=j style="width:124.00px"><i style="transform:scaleX(0.7045)">プラグインマネージャー</i></b></div>
<div class=t style="left:559.5px;top:604.6px;font-size:16.0px;color:#d4d4d4;"><b class=j style="width:74.00px"><i style="transform:scaleX(0.6607)">ノートリピート</i></b></div>
<div class=t style="left:559.5px;top:633.4px;font-size:16.0px;color:#d4d4d4;"><b class=j style="width:90.00px"><i style="transform:scaleX(0.7031)">ビデオプレイヤー</i></b></div>
<div class=r style="left:532.0px;top:659.8px;width:285.0px;height:1.5px;background:#48494d;"></div>
<div class=t style="left:559.5px;top:667.0px;font-size:16.0px;color:#d4d4d4;"><b class=j style="width:70.00px"><i style="transform:scaleX(0.7292)">カスタマイズ</i></b></div>
<svg class=r style="left:798.0px;top:671.0px" width="8" height="12"><path d="M1 1 L7 6 L1 11 Z" fill="#d8d8d8"/></svg>
<div class=t style="left:559.5px;top:695.8px;font-size:16.0px;color:#d4d4d4;"><b class=j style="width:83.00px"><i style="transform:scaleX(0.7411)">その他のビュー</i></b></div>
<svg class=r style="left:798.0px;top:699.8px" width="8" height="12"><path d="M1 1 L7 6 L1 11 Z" fill="#d8d8d8"/></svg>
<div class=t style="left:559.5px;top:724.0px;font-size:16.0px;color:#d4d4d4;"><b class=j style="width:55.00px"><i style="transform:scaleX(0.6875)">ウィンドウ</i></b></div>
<svg class=r style="left:798.0px;top:728.0px" width="8" height="12"><path d="M1 1 L7 6 L1 11 Z" fill="#d8d8d8"/></svg>
<div class=r style="left:532.0px;top:749.8px;width:285.0px;height:1.5px;background:#48494d;"></div>
<div class=t style="left:559.5px;top:757.2px;font-size:16.0px;color:#d4d4d4;"><b class=j style="width:34.00px"><i style="transform:scaleX(0.7083)">ズーム</i></b></div>
<svg class=r style="left:798.0px;top:761.2px" width="8" height="12"><path d="M1 1 L7 6 L1 11 Z" fill="#d8d8d8"/></svg>
<div class=t style="left:559.5px;top:786.0px;font-size:16.0px;color:#d4d4d4;"><b class=j style="width:46.50px"><i style="transform:scaleX(0.9688)">可視性</i></b></div>
<svg class=r style="left:798.0px;top:790.0px" width="8" height="12"><path d="M1 1 L7 6 L1 11 Z" fill="#d8d8d8"/></svg>
<div class=r style="left:815px;top:336px;width:258px;height:269px;border-radius:7px;background:#2b2c30;box-shadow:inset 0 0 0 1.3px #434447"></div>
<div class=t style="left:846.5px;top:347.0px;font-size:16.0px;color:#d4d4d4;"><b class=j style="width:113.50px"><i style="transform:scaleX(0.7882)">ホームページを表示</i></b></div>
<div class=t style="left:846.5px;top:376.0px;font-size:16.0px;color:#d4d4d4;"><b class=j style="width:145.50px"><i style="transform:scaleX(0.7578)">インストゥルメントを表示</i></b></div>
<div class=t style="left:1002.5px;top:376.0px;font-size:16.0px;color:#d4d4d4;">F6</div>
<div class=t style="left:846.5px;top:404.5px;font-size:16.0px;color:#d4d4d4;"><b class=j style="width:97.00px"><i style="transform:scaleX(0.7578)">エフェクトを表示</i></b></div>
<div class=t style="left:1002.5px;top:404.5px;font-size:16.0px;color:#d4d4d4;">F7</div>
<div class=t style="left:846.5px;top:433.3px;font-size:16.0px;color:#d4d4d4;"><b class=j style="width:77.50px"><i style="transform:scaleX(0.8073)">ループを表示</i></b></div>
<div class=t style="left:1002.5px;top:433.3px;font-size:16.0px;color:#d4d4d4;">F8</div>
<div class=t style="left:846.5px;top:462.2px;font-size:16.0px;color:#d4d4d4;">Splice<b class=j style="width:43.92px"><i style="transform:scaleX(0.9150)">を表示</i></b></div>
<div class=r style="left:819px;top:486px;width:249px;height:28.5px;border-radius:5px;background:#0068cf"></div>
<div class=t style="left:846.5px;top:491.6px;font-size:16.0px;color:#ffffff;">Tonalic<b class=j style="width:45.20px"><i style="transform:scaleX(0.9416)">を表示</i></b></div>
<div class=t style="left:846.5px;top:519.9px;font-size:16.0px;color:#d4d4d4;"><b class=j style="width:87.50px"><i style="transform:scaleX(0.7812)">ファイルを表示</i></b></div>
<div class=t style="left:1002.5px;top:519.9px;font-size:16.0px;color:#d4d4d4;">F9</div>
<div class=t style="left:846.5px;top:548.7px;font-size:16.0px;color:#d4d4d4;"><b class=j style="width:77.50px"><i style="transform:scaleX(0.8073)">プールを表示</i></b></div>
<div class=t style="left:1002.5px;top:548.7px;font-size:16.0px;color:#d4d4d4;">F10</div>
<div class=t style="left:846.5px;top:577.6px;font-size:16.0px;color:#d4d4d4;"><b class=j style="width:88.50px"><i style="transform:scaleX(0.7902)">クラウドを表示</i></b></div>
</body></html>
